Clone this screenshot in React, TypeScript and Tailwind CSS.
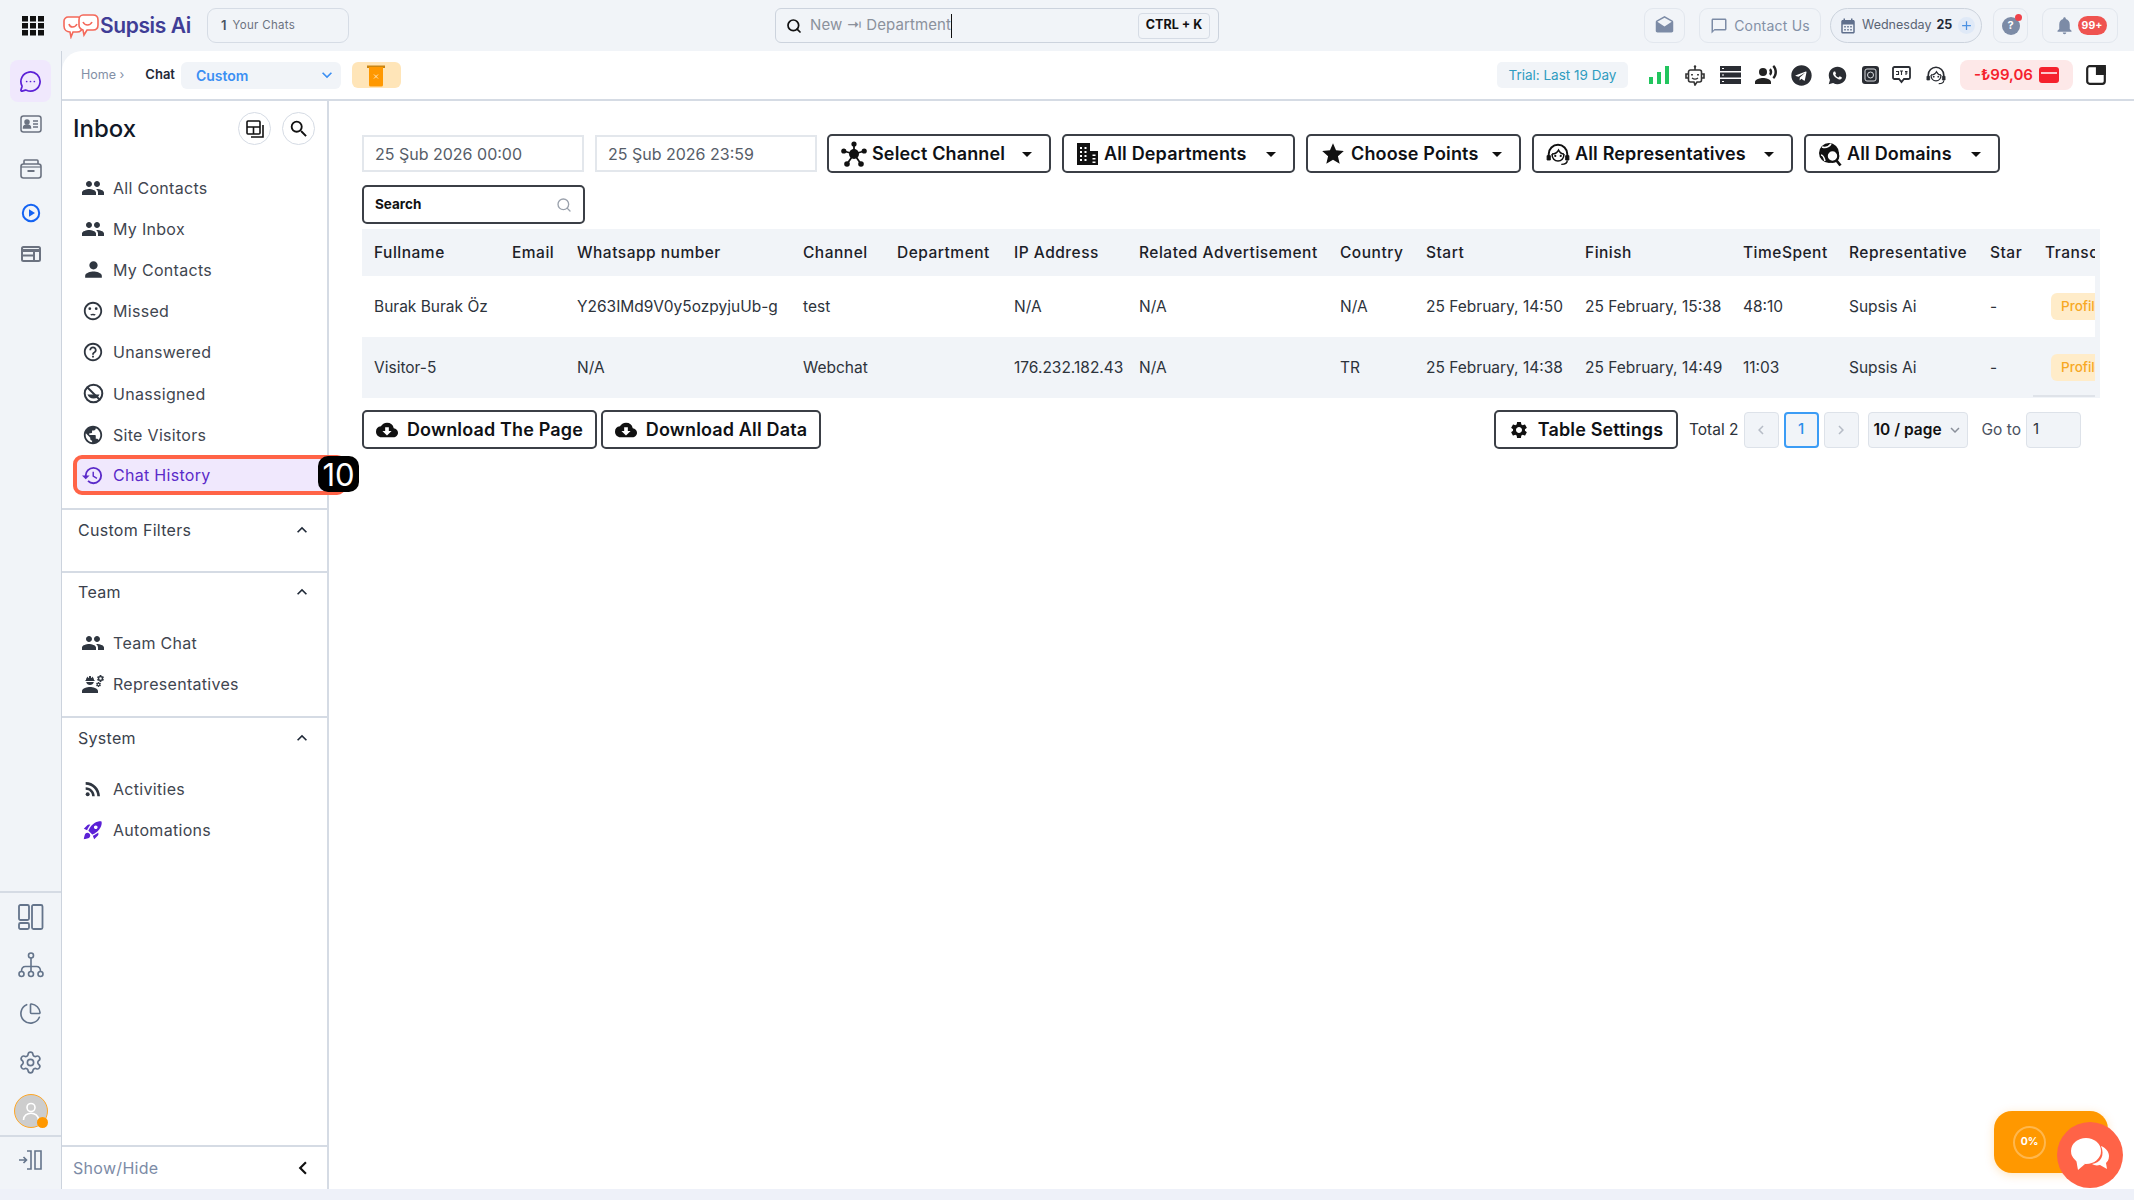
import React from "react";
import {
  MdPeople, MdPerson, MdSentimentDissatisfied, MdHelpOutline, MdPublic, MdHistory, MdRssFeed, MdRocketLaunch,
  MdSearch, MdExpandMore, MdExpandLess, MdChevronLeft, MdChevronRight, MdCloudDownload, MdSettings, MdArrowDropDown, MdStar,
  MdNotifications, MdCalendarMonth, MdDrafts, MdChatBubbleOutline, MdRecordVoiceOver, MdAdd, MdEngineering,
} from "react-icons/md";
import { FaTelegram } from "react-icons/fa";
import { RiWhatsappFill } from "react-icons/ri";
import { MessageCircleMore, ChartPie, Settings, Search } from "lucide-react";

const Grid = () => (
  <svg width="22" height="20" viewBox="0 0 22 20" fill="#111">
    {[0, 8, 16].map((x) => [0, 7, 14].map((y) => <rect key={`${x}-${y}`} x={x} y={y} width="6" height="5.5" />))}
  </svg>
);

const Logo = () => (
  <svg width="36" height="26" viewBox="0 0 36 26" fill="none" stroke="#f4685a" strokeWidth="1.6">
    <path d="M5 4h10c2 0 4 2 4 4v6c0 3-2 5-5 5h-4l-2 5-1-5C4 19 1 17 1 13V8c0-2 2-4 4-4z" fill="#fff" />
    <path d="M20 2h10c3 0 5 2 5 5v5c0 3-2 5-5 5h-6l-3 5-1-5c-3-1-4-3-4-5V7c0-3 2-5 4-5z" fill="#fff" />
    <path d="M6 11c1 4 6 4 8 0M20 9c2 4 7 4 9 0" />
  </svg>
);

const CardIcon = () => (
  <svg width="22" height="18" viewBox="0 0 22 18" fill="none" stroke="#6b7280" strokeWidth="1.5">
    <rect x="1" y="1" width="20" height="16" rx="2.5" />
    <circle cx="7" cy="7" r="2" fill="#6b7280" />
    <path d="M3.5 13c0-4 7-4 7 0z" fill="#6b7280" />
    <path d="M13 6h5M13 9h5M13 12h5" />
  </svg>
);

const ArchiveIcon = () => (
  <svg width="22" height="20" viewBox="0 0 22 20" fill="none" stroke="#6b7280" strokeWidth="1.6">
    <path d="M4 5V2a1 1 0 0 1 1-1h12a1 1 0 0 1 1 1v3" />
    <rect x="1" y="5" width="20" height="14" rx="2.5" />
    <path d="M1 8h20" strokeWidth="1.2" />
    <path d="M7.5 12h7" strokeWidth="2" />
  </svg>
);

const PlayIcon = () => (
  <svg width="20" height="20" viewBox="0 0 20 20" fill="none">
    <circle cx="10" cy="10" r="8.2" stroke="#1463f3" strokeWidth="2" />
    <path d="M8 6.2l6 3.8-6 3.8z" fill="#1463f3" />
  </svg>
);

const WindowIcon = () => (
  <svg width="20" height="16" viewBox="0 0 20 16" fill="none" stroke="#6b7280" strokeWidth="2">
    <rect x="1" y="1" width="18" height="14" rx="1.5" />
    <path d="M1 4.5h18" strokeWidth="3" />
    <path d="M13 6v9M1 9.5h12" />
  </svg>
);

const PanelsIcon = () => (
  <svg width="26" height="26" viewBox="0 0 26 26" fill="none" stroke="#64748b" strokeWidth="1.8">
    <rect x="1" y="1" width="10" height="15" rx="1.5" />
    <rect x="1" y="19" width="10" height="6" rx="1.5" />
    <rect x="14" y="1" width="10.5" height="24" rx="1.5" />
  </svg>
);

const TreeIcon = () => (
  <svg width="26" height="26" viewBox="0 0 26 26" fill="none" stroke="#64748b" strokeWidth="1.6">
    <circle cx="13" cy="3.5" r="2.5" />
    <circle cx="3.5" cy="22" r="2.5" />
    <circle cx="13" cy="22" r="2.5" />
    <circle cx="22.5" cy="22" r="2.5" />
    <path d="M13 6v13.5M3.5 19.5c0-4 2-5 4-5h11c2 0 4 1 4 5" />
  </svg>
);

const CollapseIcon = () => (
  <svg width="24" height="20" viewBox="0 0 24 20" fill="none" stroke="#64748b" strokeWidth="1.6">
    <path d="M0 10h7M4.5 7l3 3-3 3M8 1h4v18H8M16 1h6v18h-6z" />
  </svg>
);

const TrashIcon = () => (
  <svg width="18" height="24" viewBox="0 0 18 24">
    <path d="M0 2.5h18V5H0z" fill="#c98512" />
    <path d="M2 4h14v18a1.5 1.5 0 0 1-1.5 1.5h-11A1.5 1.5 0 0 1 2 22z" fill="#ff9800" />
    <path d="M7 11.5l4 4m0-4l-4 4" stroke="#ffe6b8" strokeWidth="1" />
  </svg>
);

const LayoutSmall = () => (
  <svg width="18" height="18" viewBox="0 0 18 18" fill="none" stroke="#111" strokeWidth="1.6">
    <rect x="1" y="1" width="13" height="13" rx="1" />
    <path d="M1 7h13M7.5 7v7M17 5v12H5" />
  </svg>
);

const SignalIcon = () => (
  <svg width="20" height="18" viewBox="0 0 20 18" fill="#22c55e">
    <rect x="0" y="11" width="4" height="7" />
    <rect x="8" y="6" width="4" height="12" />
    <rect x="16" y="0" width="4" height="18" />
  </svg>
);

const BotIcon = () => (
  <svg width="20" height="21" viewBox="0 0 20 21" fill="none" stroke="#333" strokeWidth="1.6">
    <path d="M10 1v4" />
    <circle cx="10" cy="1.5" r="1.2" fill="#333" stroke="none" />
    <path d="M5.5 5h9a2 2 0 0 1 2 2v8a2 2 0 0 1-2 2H12l-2 3-1-3H5.5a2 2 0 0 1-2-2V7a2 2 0 0 1 2-2z" />
    <path d="M3 9H1v4h2M17 9h2v4h-2" />
    <path d="M7 9v1.5M13 9v1.5" strokeWidth="1.8" />
    <path d="M7 13c2 1.5 4 1.5 6 0" strokeWidth="1.3" />
  </svg>
);

const ServerIcon = () => (
  <svg width="21" height="18" viewBox="0 0 21 18">
    {[0, 6.5, 13].map((y) => (
      <g key={y}>
        <rect x="0" y={y} width="21" height="5" fill="#2a2d33" />
        <rect x="2" y={y + 2} width="2" height="1" fill="#fff" />
      </g>
    ))}
  </svg>
);

const InstaIcon = () => (
  <svg width="17" height="18" viewBox="0 0 17 18" fill="none">
    <rect x="0" y="0" width="17" height="18" rx="3" fill="#2a2d33" />
    <rect x="3" y="3" width="11" height="12" rx="2" stroke="#d9dce0" strokeWidth="1" />
    <circle cx="8.5" cy="9" r="3" stroke="#d9dce0" strokeWidth="1" />
  </svg>
);

const ChatBadgeIcon = () => (
  <svg width="19" height="18" viewBox="0 0 19 18" fill="none" stroke="#2a2d33" strokeWidth="1.8">
    <path d="M2.5 1h14A1.5 1.5 0 0 1 18 2.5v9a1.5 1.5 0 0 1-1.5 1.5H12l-2.5 3L7 13H2.5A1.5 1.5 0 0 1 1 11.5v-9A1.5 1.5 0 0 1 2.5 1z" />
    <path d="M4 5.5h2.5v3H4M8 5h3M9.5 5v4M13 5.5h2.5M14 7h1.5M14 9V5.5" strokeWidth="1.1" />
  </svg>
);

const HeadsetPerson = ({ size = 20, color = "#2a2d33" }: { size?: number; color?: string }) => (
  <svg width={size} height={size} viewBox="0 0 22 22" fill="none" stroke={color} strokeWidth="1.8">
    <path d="M2.5 15V11a8.5 8.5 0 0 1 17 0v4" />
    <path d="M5.5 11c3 0 5-1.5 6-3.5 1 2 3 3.5 5 3.5" strokeWidth="1.4" />
    <path d="M5.5 11c0 4 2.5 6.5 5.5 6.5s5.5-2.5 5.500-6.5" strokeWidth="1.4" />
    <path d="M1 12.5v4h3v-4zM18 12.5v4h3v-4z" fill={color} strokeWidth="0.8" />
    <path d="M19.5 17c0 2.5-2.500 3.500-5.500 3.500" strokeWidth="1.3" />
    <circle cx="8.5" cy="12.8" r="1" fill={color} stroke="none" />
    <circle cx="13.5" cy="12.8" r="1" fill={color} stroke="none" />
  </svg>
);

const WindowSmall = () => (
  <svg width="20" height="20" viewBox="0 0 20 20" fill="none" stroke="#222" strokeWidth="2.2">
    <rect x="1.2" y="1.2" width="17.6" height="17.6" rx="2.5" />
    <path d="M11 1.2h7.8V9H11z" fill="#222" />
  </svg>
);

const BubbleIcon = () => (
  <svg width="40" height="36" viewBox="0 0 40 36" fill="#fff">
    <ellipse cx="16" cy="14" rx="15" ry="13" />
    <path d="M6 22l2 11 7-6z" />
    <path d="M31 9c5 2 8 6 8 10s-2 6-3 7l1 6-7-4c-4 1-6 0-8-1 9-1 13-9 9-18z" />
  </svg>
);

const ChannelIcon = () => (
  <svg width="26" height="26" viewBox="0 0 26 26" fill="#111" stroke="#111">
    <path d="M13 13V3M13 13L2.5 10M13 13L23.5 10M13 13L6 23M13 13l7 10" strokeWidth="1.8" />
    <circle cx="13" cy="13" r="5" stroke="none" />
    <circle cx="13" cy="3" r="2.6" stroke="none" />
    <circle cx="2.8" cy="10" r="2.6" stroke="none" />
    <circle cx="23.2" cy="10" r="2.6" stroke="none" />
    <circle cx="6" cy="23" r="2.8" stroke="none" />
    <circle cx="20" cy="23" r="2.8" stroke="none" />
  </svg>
);

const BuildingIcon = () => (
  <svg width="23" height="24" viewBox="0 0 23 24">
    <path d="M1 1h13v22H1zM14 9h8v14h-8z" fill="#111" />
    <path d="M4 5h2v2H4zM8.5 5h2v2h-2zM4 9h2v2H4zM8.5 9h2v2h-2zM4 13h2v2H4zM8.5 13h2v2h-2zM4 17h2v2H4zM8.5 17h2v2h-2zM16.5 12.5h3V14h-3zM16.5 16h3v1.5h-3zM16.5 19.5h3V21h-3z" fill="#fff" />
  </svg>
);

const DomainIcon = () => (
  <svg width="24" height="26" viewBox="0 0 24 26" fill="none">
    <circle cx="11" cy="12" r="10" fill="#111" />
    <path d="M4 6c3 1 6 1 9-3M3 14c2 0 3 2 4 6" stroke="#fff" strokeWidth="1.5" />
    <circle cx="14.5" cy="15" r="5.8" fill="#fff" stroke="#111" strokeWidth="2.2" />
    <path d="M18.5 19.5l4 5" stroke="#111" strokeWidth="2.8" />
  </svg>
);

const UnassignedIcon = () => (
  <svg width="21" height="21" viewBox="0 0 21 21" fill="none" stroke="#2f3640" strokeWidth="2">
    <circle cx="10.5" cy="10.5" r="8.8" />
    <path d="M4.5 11.5h12a6.5 6.5 0 0 1-12 0z" fill="#2f3640" strokeWidth="0" />
    <path d="M4.5 4.5l12 12" />
  </svg>
);

type Item = { label: string; icon: React.ReactNode };

const ppl = <MdPeople size={24} color="#2f3640" />;

const mainItems: Item[] = [
  { label: "All Contacts", icon: ppl },
  { label: "My Inbox", icon: ppl },
  { label: "My Contacts", icon: <MdPerson size={25} color="#2f3640" /> },
  { label: "Missed", icon: <MdSentimentDissatisfied size={22} color="#2f3640" /> },
  { label: "Unanswered", icon: <MdHelpOutline size={22} color="#2f3640" /> },
  { label: "Unassigned", icon: <UnassignedIcon /> },
  { label: "Site Visitors", icon: <MdPublic size={22} color="#2f3640" /> },
];

const NavRow = ({ item }: { item: Item }) => (
  <div className="flex h-[41.2px] items-center pl-[11px]">
    <span className="flex w-[40px] justify-center">{item.icon}</span>
    <span className="whitespace-nowrap text-[16px] tracking-[0.3px] text-[#3f4650]">{item.label}</span>
  </div>
);

const SectionHead = ({ title, h }: { title: string; h: string }) => (
  <div className={`${h} flex items-center justify-between pl-[16px] pr-[15px]`}>
    <span className="text-[16px] tracking-[0.3px] text-[#3a414c]">{title}</span>
    <MdExpandLess size={20} color="#1f2937" />
  </div>
);

const FilterBtn = ({ icon, label, w }: { icon: React.ReactNode; label: string; w: string }) => (
  <button className={`${w} flex h-[39px] shrink-0 items-center justify-between rounded-[5px] border-2 border-[#3b3f46] bg-white pl-[12px] pr-[10px]`}>
    <span className="flex items-center gap-[5px]">
      {icon}
      <span className="whitespace-nowrap text-[18px] font-semibold tracking-[0.15px] text-[#0f1115]">{label}</span>
    </span>
    <MdArrowDropDown size={24} color="#111" />
  </button>
);

const BottomBtn = ({ icon, label, w }: { icon: React.ReactNode; label: string; w: string }) => (
  <button className={`${w} flex h-[39px] shrink-0 items-center justify-center gap-[9px] rounded-[5px] border-2 border-[#3b3f46] bg-white`}>
    {icon}
    <span className="whitespace-nowrap text-[18px] font-semibold tracking-[0.15px] text-[#0f1115]">{label}</span>
  </button>
);

const cols = ["w-[138px]", "w-[65px]", "w-[226px]", "w-[94px]", "w-[117px]", "w-[125px]", "w-[201px]", "w-[86px]", "w-[159px]", "w-[158px]", "w-[106px]", "w-[141px]", "w-[55px]", "w-[110px]"];
const heads = ["Fullname", "Email", "Whatsapp number", "Channel", "Department", "IP Address", "Related Advertisement", "Country", "Start", "Finish", "TimeSpent", "Representative", "Star", "Transc"];
const rows = [
  ["Burak Burak Öz", "", "Y263IMd9V0y5ozpyjuUb-g", "test", "", "N/A", "N/A", "N/A", "25 February, 14:50", "25 February, 15:38", "48:10", "Supsis Ai", "-"],
  ["Visitor-5", "", "N/A", "Webchat", "", "176.232.182.43", "N/A", "TR", "25 February, 14:38", "25 February, 14:49", "11:03", "Supsis Ai", "-"],
];

const railBottom = "flex h-[48.5px] items-center justify-center";

export default function App() {
  return (
    <div className="flex h-[1200px] w-[2134px] flex-col overflow-hidden bg-[#f1f4f8] [font-family:Inter,'Noto_Sans',sans-serif]">
      {/* top bar */}
      <header className="flex h-[51px] shrink-0 items-center">
        <div className="ml-[22px]"><Grid /></div>
        <div className="ml-[19px]"><Logo /></div>
        <span className="ml-[1px] w-[86px] whitespace-nowrap text-[21px] font-semibold tracking-[-0.4px] text-[#3f3d96]">Supsis Ai</span>
        <div className="ml-[21px] flex h-[35px] w-[142px] items-center rounded-[9px] border border-[#d6dce5] pl-[13px]">
          <span className="text-[13px] font-semibold text-[#4b5563]">1</span>
          <span className="ml-[6px] whitespace-nowrap text-[11.5px] tracking-[0.3px] text-[#6b7280]">Your Chats</span>
        </div>
        <div className="ml-[426px] flex h-[35px] w-[444px] items-center rounded-[6px] border border-[#ccd3dd] pl-[10px] pr-[8px]">
          <Search size={16} strokeWidth={2.6} color="#111" />
          <span className="ml-[8px] whitespace-nowrap text-[15px] tracking-[0.1px] text-[#8b919c]">New ⇥ Department</span>
          <span className="h-[24px] w-[1px] bg-[#111]" />
          <span className="ml-auto flex h-[26px] w-[72px] items-center justify-center rounded-[4px] border border-[#d6dce5] text-[12.5px] font-bold text-[#111]">CTRL + K</span>
        </div>
        <div className="ml-[425px] flex h-[35px] w-[41px] items-center justify-center rounded-[9px] border border-[#e2e7ee]">
          <MdDrafts size={21} color="#7c8ba6" />
        </div>
        <div className="ml-[14px] flex h-[35px] w-[122px] items-center justify-center gap-[6px] rounded-[9px] border border-[#e2e7ee]">
          <MdChatBubbleOutline size={18} color="#7c8ba6" />
          <span className="whitespace-nowrap text-[14px] tracking-[0.2px] text-[#8390a6]">Contact Us</span>
        </div>
        <div className="ml-[9px] flex h-[35px] w-[152px] items-center rounded-full border border-[#ccd3dd] bg-[#edf1f7] pl-[8px]">
          <MdCalendarMonth size={18} color="#5f6f8c" />
          <span className="ml-[5px] text-[12.5px] text-[#5a6474]">Wednesday</span>
          <span className="ml-[5px] text-[12.5px] font-bold text-[#1f2937]">25</span>
          <span className="ml-[6px] flex h-[17px] w-[17px] items-center justify-center rounded-full bg-[#dfe9f7]"><MdAdd size={15} color="#4a90e2" /></span>
        </div>
        <div className="relative ml-[11px] flex h-[35px] w-[35px] items-center justify-center rounded-[9px] border border-[#e2e7ee]">
          <span className="flex h-[18px] w-[18px] items-center justify-center rounded-full bg-[#7c8ba6] text-[11px] font-bold text-white">?</span>
          <span className="absolute right-[5px] top-[5px] h-[7px] w-[7px] rounded-full bg-[#f0424a]" />
        </div>
        <div className="ml-[14px] flex h-[35px] w-[76px] items-center justify-center gap-[3px] rounded-[9px] border border-[#e2e7ee]">
          <MdNotifications size={21} color="#7c8ba6" />
          <span className="flex h-[19px] w-[29px] items-center justify-center rounded-full bg-[#ef5350] text-[10.5px] font-bold text-white">99+</span>
        </div>
      </header>

      <div className="flex min-h-0 flex-1">
        {/* rail */}
        <aside className="flex w-[62px] shrink-0 flex-col border-r border-[#ccd3dd]">
          <div className="flex flex-1 flex-col items-center pt-[9px]">
            <div className="flex h-[42px] w-[41px] items-center justify-center rounded-[8px] bg-[#f0e8fd]">
              <MessageCircleMore size={23} color="#5b21d6" strokeWidth={1.8} />
            </div>
            <div className="mt-[13px]"><CardIcon /></div>
            <div className="mt-[26px]"><ArchiveIcon /></div>
            <div className="mt-[24px]"><PlayIcon /></div>
            <div className="mt-[23px]"><WindowIcon /></div>
          </div>
          <div className="flex flex-col border-t-2 border-[#d5dbe4]">
            <div className={railBottom}><PanelsIcon /></div>
            <div className={railBottom}><TreeIcon /></div>
            <div className={railBottom}><ChartPie size={23} color="#64748b" strokeWidth={1.7} /></div>
            <div className={railBottom}><Settings size={25} color="#64748b" strokeWidth={1.6} /></div>
            <div className={railBottom}>
              <div className="relative flex h-[34px] w-[34px] items-center justify-center rounded-full border border-[#ffa726] bg-[#cdcdcd]">
                <svg width="20" height="20" viewBox="0 0 20 20" fill="none" stroke="#fff" strokeWidth="1.6"><circle cx="10" cy="6.5" r="4" /><path d="M2.5 19c0-9 15-9 15 0" /></svg>
                <span className="absolute bottom-[-1px] right-[-1px] h-[11px] w-[11px] rounded-full bg-[#ff9800]" />
              </div>
            </div>
          </div>
          <div className="flex h-[54px] items-center justify-center border-t-2 border-[#d5dbe4] pb-[6px]"><CollapseIcon /></div>
        </aside>

        {/* main */}
        <main className="flex min-w-0 flex-1 flex-col overflow-hidden rounded-tl-[20px] bg-white">
          <div className="flex h-[50px] shrink-0 items-center border-b-2 border-[#d5dbe4]">
            <span className="ml-[19px] text-[12.5px] text-[#8390a6]">Home ›</span>
            <span className="ml-[21px] text-[13px] font-semibold text-[#1f2937]">Chat</span>
            <div className="ml-[6px] flex h-[27px] w-[160px] items-center justify-between rounded-[6px] bg-[#f1f4f8] pl-[15px] pr-[4px]">
              <span className="text-[14px] font-semibold text-[#3b8ff3]">Custom</span>
              <MdExpandMore size={20} color="#3b8ff3" />
            </div>
            <div className="ml-[11px] flex h-[26px] w-[49px] items-center justify-center rounded-[6px] bg-[#ffe5b8]"><TrashIcon /></div>
            <div className="ml-[1096px] flex h-[26px] w-[131px] items-center justify-center rounded-[5px] bg-[#f1f4f8] text-[13.5px] text-[#2f9cc0]">Trial: Last 19 Day</div>
            <div className="ml-[21px]"><SignalIcon /></div>
            <div className="ml-[16px]"><BotIcon /></div>
            <div className="ml-[15px]"><ServerIcon /></div>
            <div className="ml-[13px]"><MdRecordVoiceOver size={24} color="#222" /></div>
            <div className="ml-[13px]"><FaTelegram size={21} color="#2a2d33" /></div>
            <div className="ml-[15px]"><RiWhatsappFill size={21} color="#2a2d33" /></div>
            <div className="ml-[14px]"><InstaIcon /></div>
            <div className="ml-[13px]"><ChatBadgeIcon /></div>
            <div className="ml-[15px]"><HeadsetPerson /></div>
            <div className="ml-[14px] flex h-[30px] w-[113px] items-center justify-center gap-[6px] rounded-[8px] bg-[#fde8e8] text-[15px] font-semibold text-[#f5222d]">
              -₺99,06
              <svg width="20" height="16" viewBox="0 0 20 16"><rect width="20" height="16" rx="3" fill="#f5222d" /><path d="M2 6h16" stroke="#fff" strokeWidth="1.5" /></svg>
            </div>
            <div className="ml-[13px]"><WindowSmall /></div>
          </div>

          <div className="flex min-h-0 flex-1">
            {/* sidebar */}
            <nav className="flex w-[267px] shrink-0 flex-col border-r-2 border-[#d5dbe4]">
              <div className="flex h-[55px] items-center justify-between pl-[11px] pr-[12px]">
                <span className="text-[24px] font-medium text-[#111827]">Inbox</span>
                <div className="flex gap-[11px]">
                  <span className="flex h-[33px] w-[33px] items-center justify-center rounded-full border border-[#d5dbe4]"><LayoutSmall /></span>
                  <span className="flex h-[33px] w-[33px] items-center justify-center rounded-full border border-[#d5dbe4]"><MdSearch size={22} color="#111" /></span>
                </div>
              </div>
              <div className="border-b-2 border-[#d5dbe4] pb-[13px] pt-[11px]">
                {mainItems.map((it) => <NavRow key={it.label} item={it} />)}
                <div className="relative ml-[11px] mr-[-19px] flex h-[40px] items-center rounded-[9px] border-[4px] border-[#ff6347] bg-[#f0e8fd] pl-[4px]">
                  <span className="flex w-[32px]"><MdHistory size={23} color="#5b2bc9" /></span>
                  <span className="text-[16px] tracking-[0.3px] text-[#5b2bc9]">Chat History</span>
                  <span className="absolute right-[-17px] top-[-3px] flex h-[36px] w-[41px] items-center justify-center rounded-[10px] bg-black text-[31px] leading-none text-white">10</span>
                </div>
              </div>
              <div className="h-[63px] border-b-2 border-[#d5dbe4]">
                <SectionHead title="Custom Filters" h="h-[39px]" />
              </div>
              <div className="h-[145px] border-b-2 border-[#d5dbe4]">
                <SectionHead title="Team" h="h-[37px]" />
                <div className="pt-[12px]">
                  <NavRow item={{ label: "Team Chat", icon: ppl }} />
                  <NavRow item={{ label: "Representatives", icon: <MdEngineering size={24} color="#2f3640" /> }} />
                </div>
              </div>
              <div className="flex-1">
                <SectionHead title="System" h="h-[39px]" />
                <div className="pt-[11px]">
                  <NavRow item={{ label: "Activities", icon: <MdRssFeed size={22} color="#2f3640" /> }} />
                  <NavRow item={{ label: "Automations", icon: <MdRocketLaunch size={22} color="#5b21d6" /> }} />
                </div>
              </div>
              <div className="flex h-[44px] items-center justify-between border-t-2 border-[#d5dbe4] pl-[11px] pr-[11px]">
                <span className="text-[16px] tracking-[0.3px] text-[#7c8ba6]">Show/Hide</span>
                <MdChevronLeft size={26} color="#111" />
              </div>
            </nav>

            {/* content */}
            <section className="relative min-w-0 flex-1 pl-[33px] pr-[33px] pt-[33px]">
              <div className="flex items-center">
                <div className="flex h-[37px] w-[222px] shrink-0 items-center border-2 border-[#e3e7ec] pl-[11px] text-[16px] text-[#565d68]">25 Şub 2026 00:00</div>
                <div className="ml-[11px] flex h-[37px] w-[222px] shrink-0 items-center border-2 border-[#e3e7ec] pl-[11px] text-[16px] text-[#565d68]">25 Şub 2026 23:59</div>
                <div className="ml-[10px]"><FilterBtn w="w-[224px]" icon={<ChannelIcon />} label="Select Channel" /></div>
                <div className="ml-[11px]"><FilterBtn w="w-[233px]" icon={<BuildingIcon />} label="All Departments" /></div>
                <div className="ml-[11px]"><FilterBtn w="w-[215px]" icon={<MdStar size={26} color="#111" />} label="Choose Points" /></div>
                <div className="ml-[11px]"><FilterBtn w="w-[261px]" icon={<HeadsetPerson size={24} color="#111" />} label="All Representatives" /></div>
                <div className="ml-[11px]"><FilterBtn w="w-[196px]" icon={<DomainIcon />} label="All Domains" /></div>
              </div>
              <div className="mt-[12px] flex h-[39px] w-[223px] items-center justify-between rounded-[5px] border-2 border-[#3b3f46] pl-[11px] pr-[11px]">
                <span className="text-[13.5px] font-bold text-[#111]">Search</span>
                <Search size={16} color="#9aa1ac" />
              </div>
              <div className="relative mt-[5px] w-[1738px] overflow-hidden bg-[#f1f4f8] pr-[5px]">
                <div className="overflow-hidden bg-white">
                  <table className="w-[1781px] table-fixed border-collapse text-left text-[15.5px]">
                    <colgroup>{cols.map((c, i) => <col key={i} className={c} />)}</colgroup>
                    <thead>
                      <tr className="h-[47px] bg-[#f1f4f8]">
                        {heads.map((h) => <th key={h} className="overflow-hidden whitespace-nowrap pl-[12px] font-medium tracking-[0.5px] text-[#1c2128]">{h}</th>)}
                      </tr>
                    </thead>
                    <tbody>
                      {rows.map((r, i) => (
                        <tr key={i} className={i === 0 ? "h-[61px] bg-white" : "h-[61px] bg-[#f1f4f8]"}>
                          {r.map((c, j) => <td key={j} className="overflow-hidden whitespace-nowrap pl-[12px] text-[#2d333b]">{c}</td>)}
                          <td className="pl-[18px]">
                            <span className="flex h-[27px] w-[60px] items-center rounded-[6px] bg-[#ffecc9] pl-[10px] text-[13.5px] font-medium text-[#f7a823]">Profile</span>
                          </td>
                        </tr>
                      ))}
                    </tbody>
                  </table>
                </div>
                <div className="absolute bottom-[1px] right-[5px] h-[2px] w-[62px] bg-[#dfe3e9]" />
              </div>
              <div className="mt-[12px] flex items-center">
                <BottomBtn w="w-[235px]" icon={<MdCloudDownload size={22} color="#111" />} label="Download The Page" />
                <div className="ml-[4px]"><BottomBtn w="w-[220px]" icon={<MdCloudDownload size={22} color="#111" />} label="Download All Data" /></div>
                <div className="ml-[673px]"><BottomBtn w="w-[184px]" icon={<MdSettings size={20} color="#111" />} label="Table Settings" /></div>
                <span className="ml-[11px] whitespace-nowrap text-[15.5px] text-[#2d333b]">Total 2</span>
                <span className="ml-[5px] flex h-[36px] w-[35px] items-center justify-center rounded-[4px] border border-[#dde2e9] bg-[#f1f4f8]"><MdChevronLeft size={18} color="#b6bcc6" /></span>
                <span className="ml-[5px] flex h-[36px] w-[35px] items-center justify-center rounded-[4px] border-2 border-[#3b9cf5] bg-[#f1f4f8] text-[15px] font-medium text-[#2b8eea]">1</span>
                <span className="ml-[5px] flex h-[36px] w-[35px] items-center justify-center rounded-[4px] border border-[#dde2e9] bg-[#f1f4f8]"><MdChevronRight size={18} color="#b6bcc6" /></span>
                <span className="ml-[9px] flex h-[36px] w-[100px] items-center justify-between whitespace-nowrap rounded-[4px] border border-[#dde2e9] bg-[#f1f4f8] pl-[5px] pr-[3px] text-[15.5px] font-semibold text-[#111]">10 / page<MdExpandMore size={18} color="#8a909a" /></span>
                <span className="ml-[14px] whitespace-nowrap text-[15.5px] text-[#4b5260]">Go to</span>
                <span className="ml-[5px] flex h-[36px] w-[55px] items-center rounded-[4px] border border-[#dde2e9] bg-[#f1f4f8] pl-[6px] text-[15px] text-[#2d333b]">1</span>
              </div>
              {/* floating widget */}
              <div className="absolute bottom-[16px] right-[26px] flex h-[62px] w-[114px] items-center rounded-[18px] bg-[#ff9800] pl-[19px] shadow-[0_2px_10px_rgba(255,152,0,0.25)]">
                <span className="flex h-[33px] w-[33px] items-center justify-center rounded-full border-2 border-[#ffb74d] text-[10.5px] font-bold text-white">0%</span>
              </div>
              <div className="absolute bottom-[1px] right-[11px] flex h-[66px] w-[66px] items-center justify-center rounded-full bg-[#ff6347]"><BubbleIcon /></div>
            </section>
          </div>
        </main>
      </div>
      <div className="h-[11px] shrink-0 bg-[#eef1f9]" />
    </div>
  );
}
